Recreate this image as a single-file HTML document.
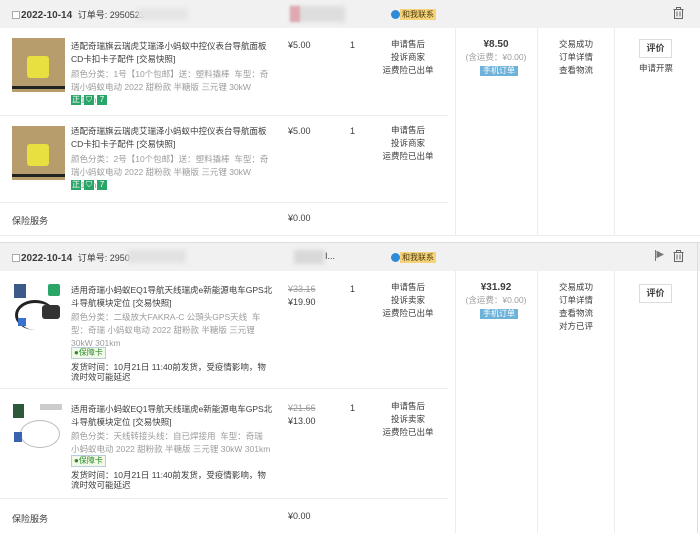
<!DOCTYPE html>
<html><head><meta charset="utf-8"><style>
*{margin:0;padding:0;box-sizing:border-box}
body{width:700px;height:533px;overflow:hidden;background:#fff;font-family:"Liberation Sans","Noto Sans CJK SC",sans-serif;font-size:9px;color:#3c3c3c;position:relative}
.a{position:absolute}
.hd{position:absolute;left:0;width:700px;height:28px;background:#f1f1f1}
.hl{position:absolute;height:1px;background:#ececec}
.vl{position:absolute;width:1px;background:#ececec}
.t{position:absolute;width:202px;line-height:13px;font-size:8.5px;color:#3c3c3c}
.g{color:#9c9c9c}
.c{position:absolute;text-align:center;line-height:13px;font-size:8.5px}
.btn{position:absolute;width:33px;height:19px;border:1px solid #dcdcdc;background:#fff;text-align:center;line-height:17px;font-weight:bold;font-size:9px}
.blur{position:absolute;background:#d8d8d8;filter:blur(2px)}
.ico{display:inline-block;width:10px;height:10px;background:#2aa568;color:#fff;font-size:8px;line-height:10px;text-align:center;margin-right:3px}
.wang{position:absolute;font-size:8px;background:#f6d37a;color:#4a3c10;padding:0 2px;line-height:11px}
.wang:before{content:"";position:absolute;left:-9px;top:1px;width:9px;height:9px;border-radius:50%;background:#2f8ad8}
.tag{position:absolute;background:#6db2d9;color:#fff;font-size:8px;line-height:10px;padding:0 3px}
.cb{display:inline-block;width:8px;height:8px;border:1px solid #aaa;background:#fff;vertical-align:-1px;margin-right:1px}
</style></head><body>

<!-- order 1 -->
<div class="hd" style="top:0"></div>
<div class="a" style="left:12px;top:8px;font-size:10px"><span class="cb"></span><b>2022-10-14</b>&nbsp; <span style="font-size:9px">订单号: 2950523</span></div>
<div class="blur" style="left:138px;top:8px;width:50px;height:12px;background:#e6e6e6"></div>
<div class="blur" style="left:290px;top:6px;width:55px;height:16px;background:#ddd"></div>
<div class="a" style="left:290px;top:6px;width:10px;height:16px;background:#e0a9b0;filter:blur(1px)"></div>
<div class="wang" style="left:400px;top:9px">和我联系</div>
<svg class="a" style="left:673px;top:7px" width="11" height="12" viewBox="0 0 11 12" fill="none" stroke="#666" stroke-width="1"><path d="M0.5 2.5h10M3.5 2.5V0.5h4v2M1.5 2.5v9h8v-9M4 4.5v5M7 4.5v5"/></svg>

<div class="a" style="left:12px;top:38px;width:53px;height:54px;background:#b89d6c"><div style="position:absolute;left:15px;top:18px;width:22px;height:22px;background:#e8e040;border-radius:3px"></div><div style="position:absolute;left:0;bottom:3px;width:53px;height:3px;background:#222"></div></div>
<div class="t" style="left:71px;top:40px">适配奇瑞旗云瑞虎艾瑞泽小蚂蚁中控仪表台导航面板CD卡扣卡子配件 [交易快照]</div>
<div class="t g" style="left:71px;top:68px">颜色分类：1号【10个包邮】送：塑料撬棒&nbsp; 车型：奇瑞小蚂蚁电动 2022 甜粉款 半糖版 三元锂 30kW 301km</div>
<div class="a" style="left:71px;top:94px"><span class="ico">正</span><span class="ico">⛉</span><span class="ico">7</span></div>
<div class="a" style="left:288px;top:40px">¥5.00</div>
<div class="a" style="left:350px;top:40px">1</div>
<div class="c" style="left:378px;top:38px;width:60px">申请售后<br>投诉商家<br>运费险已出单</div>
<div class="hl" style="left:0;top:115px;width:448px"></div>

<div class="a" style="left:12px;top:126px;width:53px;height:54px;background:#b89d6c"><div style="position:absolute;left:15px;top:18px;width:22px;height:22px;background:#e8e040;border-radius:3px"></div><div style="position:absolute;left:0;bottom:3px;width:53px;height:3px;background:#222"></div></div>
<div class="t" style="left:71px;top:125px">适配奇瑞旗云瑞虎艾瑞泽小蚂蚁中控仪表台导航面板CD卡扣卡子配件 [交易快照]</div>
<div class="t g" style="left:71px;top:153px">颜色分类：2号【10个包邮】送：塑料撬棒&nbsp; 车型：奇瑞小蚂蚁电动 2022 甜粉款 半糖版 三元锂 30kW 301km</div>
<div class="a" style="left:71px;top:179px"><span class="ico">正</span><span class="ico">⛉</span><span class="ico">7</span></div>
<div class="a" style="left:288px;top:126px">¥5.00</div>
<div class="a" style="left:350px;top:126px">1</div>
<div class="c" style="left:378px;top:124px;width:60px">申请售后<br>投诉商家<br>运费险已出单</div>
<div class="hl" style="left:0;top:202px;width:448px"></div>
<div class="a" style="left:12px;top:214px">保险服务</div>
<div class="a" style="left:288px;top:213px">¥0.00</div>
<div class="hl" style="left:0;top:235px;width:700px"></div>

<div class="c" style="left:455px;top:38px;width:82px"><b style="font-size:10px">¥8.50</b><br><span class="g">(含运费：¥0.00)</span></div>
<div class="tag" style="left:480px;top:66px">手机订单</div>
<div class="c" style="left:545px;top:38px;width:62px">交易成功<br>订单详情<br>查看物流</div>
<div class="btn" style="left:639px;top:39px">评价</div>
<div class="c" style="left:630px;top:62px;width:52px">申请开票</div>
<div class="vl" style="left:455px;top:28px;height:207px"></div>
<div class="vl" style="left:537px;top:28px;height:207px"></div>
<div class="vl" style="left:614px;top:28px;height:207px"></div>

<!-- order 2 -->
<div class="hl" style="left:0;top:242px;width:700px;background:#ddd"></div>
<div class="hd" style="top:243px"></div>
<div class="a" style="left:12px;top:251px;font-size:10px"><span class="cb"></span><b>2022-10-14</b>&nbsp; <span style="font-size:9px">订单号: 2950</span></div>
<div class="blur" style="left:128px;top:250px;width:58px;height:13px;background:#e2e2e2"></div>
<div class="blur" style="left:294px;top:250px;width:30px;height:14px"></div>
<div class="a" style="left:325px;top:251px;font-size:9px">I...</div>
<div class="wang" style="left:400px;top:252px">和我联系</div>
<svg class="a" style="left:655px;top:250px" width="9" height="11" viewBox="0 0 9 11" fill="none" stroke="#777" stroke-width="1"><path d="M0.5 0v11"/><path d="M2 1.5l6 3-6 3z" fill="#777"/></svg>
<svg class="a" style="left:673px;top:250px" width="11" height="12" viewBox="0 0 11 12" fill="none" stroke="#666" stroke-width="1"><path d="M0.5 2.5h10M3.5 2.5V0.5h4v2M1.5 2.5v9h8v-9M4 4.5v5M7 4.5v5"/></svg>
<div class="vl" style="left:697px;top:243px;height:290px;background:#ddd"></div>

<div class="a" style="left:14px;top:284px;width:12px;height:14px;background:#3b5a8a"></div>
<div class="a" style="left:48px;top:284px;width:12px;height:12px;background:#2aa568;border-radius:2px"></div>
<div class="a" style="left:15px;top:300px;width:40px;height:30px;border:3px solid #222;border-radius:50% 50% 0 50%;border-right:none;border-bottom:none"></div>
<div class="a" style="left:42px;top:305px;width:18px;height:14px;background:#333;border-radius:3px"></div>
<div class="a" style="left:18px;top:318px;width:8px;height:8px;background:#3b6fd0"></div>
<div class="t" style="left:71px;top:284px">适用奇瑞小蚂蚁EQ1导航天线瑞虎e新能源电车GPS北斗导航模块定位 [交易快照]</div>
<div class="t g" style="left:71px;top:311px">颜色分类：二级放大FAKRA-C 公頭头GPS天线&nbsp; 车型：奇瑞 小蚂蚁电动 2022 甜粉款 半糖版 三元锂 30kW 301km</div>
<div class="a" style="left:71px;top:347px;font-size:8px;color:#2a8a2a;border:1px solid #bcd;background:#f3f9e8;padding:0 2px;line-height:10px">●保障卡</div>
<div class="t" style="left:71px;top:362px;line-height:10px">发货时间：10月21日 11:40前发货，受疫情影响，物流时效可能延迟</div>
<div class="a g" style="left:288px;top:284px;text-decoration:line-through">¥33.16</div>
<div class="a" style="left:288px;top:297px">¥19.90</div>
<div class="a" style="left:350px;top:284px">1</div>
<div class="c" style="left:378px;top:281px;width:60px">申请售后<br>投诉卖家<br>运费险已出单</div>
<div class="hl" style="left:0;top:388px;width:448px"></div>

<div class="a" style="left:13px;top:404px;width:11px;height:14px;background:#2a5a3a"></div>
<div class="a" style="left:40px;top:404px;width:22px;height:6px;background:#ccc"></div>
<div class="a" style="left:20px;top:420px;width:40px;height:28px;border:1px solid #bbb;border-radius:50%"></div>
<div class="a" style="left:14px;top:432px;width:8px;height:10px;background:#3a62b0"></div>
<div class="t" style="left:71px;top:403px">适用奇瑞小蚂蚁EQ1导航天线瑞虎e新能源电车GPS北斗导航模块定位 [交易快照]</div>
<div class="t g" style="left:71px;top:430px">颜色分类：天线转接头线：自已焊接用&nbsp; 车型：奇瑞 小蚂蚁电动 2022 甜粉款 半糖版 三元锂 30kW 301km</div>
<div class="a" style="left:71px;top:455px;font-size:8px;color:#2a8a2a;border:1px solid #bcd;background:#f3f9e8;padding:0 2px;line-height:10px">●保障卡</div>
<div class="t" style="left:71px;top:470px;line-height:10px">发货时间：10月21日 11:40前发货，受疫情影响，物流时效可能延迟</div>
<div class="a g" style="left:288px;top:403px;text-decoration:line-through">¥21.66</div>
<div class="a" style="left:288px;top:416px">¥13.00</div>
<div class="a" style="left:350px;top:403px">1</div>
<div class="c" style="left:378px;top:400px;width:60px">申请售后<br>投诉卖家<br>运费险已出单</div>
<div class="hl" style="left:0;top:498px;width:448px"></div>
<div class="a" style="left:12px;top:512px">保险服务</div>
<div class="a" style="left:288px;top:511px">¥0.00</div>

<div class="c" style="left:455px;top:281px;width:82px"><b style="font-size:10px">¥31.92</b><br><span class="g">(含运费：¥0.00)</span></div>
<div class="tag" style="left:480px;top:309px">手机订单</div>
<div class="c" style="left:545px;top:281px;width:62px">交易成功<br>订单详情<br>查看物流<br>对方已评</div>
<div class="btn" style="left:639px;top:284px">评价</div>
<div class="vl" style="left:455px;top:271px;height:262px"></div>
<div class="vl" style="left:537px;top:271px;height:262px"></div>
<div class="vl" style="left:614px;top:271px;height:262px"></div>
</body></html>
